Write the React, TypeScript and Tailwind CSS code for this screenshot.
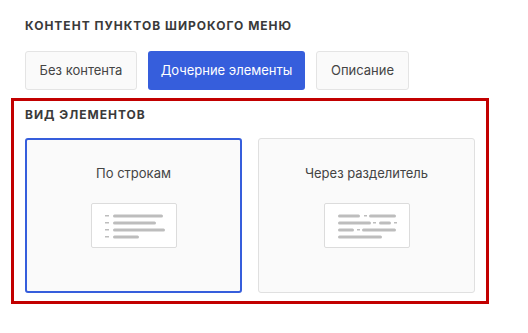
import React, { useState } from 'react';

const tabs = [
  { label: 'Без контента', w: 'w-[112px]' },
  { label: 'Дочерние элементы', w: 'w-[157px]' },
  { label: 'Описание', w: 'w-[93px]' },
];

function RowsPreview() {
  const lines = [50, 43, 52, 26];
  return (
    <svg width="86" height="45" viewBox="0 0 86 45">
      {lines.map((w, i) => (
        <g key={i}>
          <rect x="13" y={11 + i * 7} width="4" height="1.5" fill="#bdbdbd" />
          <rect x="21" y={10.5 + i * 7} width={w} height="3" rx="1.5" fill="#bdbdbd" />
        </g>
      ))}
    </svg>
  );
}

function SeparatorPreview() {
  // each row: bars and dashes, x positions relative to the box
  const rows: [number, number, boolean][][] = [
    [[13, 22, false], [39, 3, true], [44, 27, false]],
    [[13, 33, false], [48, 3, true], [54, 12, false], [69, 3, true]],
    [[13, 16, false], [32, 3, true], [37, 34, false]],
    [[13, 44, false]],
  ];
  return (
    <svg width="86" height="45" viewBox="0 0 86 45">
      {rows.map((row, i) =>
        row.map(([x, w, dash], j) =>
          dash ? (
            <rect key={`${i}-${j}`} x={x} y={11 + i * 7} width={w} height="1.5" fill="#bdbdbd" />
          ) : (
            <rect key={`${i}-${j}`} x={x} y={10.5 + i * 7} width={w} height="3" rx="1.5" fill="#bdbdbd" />
          )
        )
      )}
    </svg>
  );
}

export default function App() {
  const [tab, setTab] = useState(1);
  const [view, setView] = useState(0);

  return (
    <div className="w-[528px] h-[333px] bg-white text-[#444] font-['Inter','Open_Sans',sans-serif]">
      <div className="pl-[25px] pt-[18px]">
        <h2 className="text-[12px] font-bold tracking-[1px] text-[#3a3a3a] leading-[16px]">
          КОНТЕНТ ПУНКТОВ ШИРОКОГО МЕНЮ
        </h2>
        <div className="flex gap-[11px] mt-[17px]">
          {tabs.map((t, i) => (
            <button
              key={t.label}
              onClick={() => setTab(i)}
              className={
                t.w +
                (i === tab
                  ? ' h-[39px] rounded-[3px] bg-[#365edc] text-white text-[13px]'
                  : ' h-[39px] rounded-[3px] bg-[#fafafa] border border-[#e4e4e4] text-[#444] text-[13px]')
              }
            >
              {t.label}
            </button>
          ))}
        </div>
      </div>

      <div className="ml-[11px] mt-[8px] w-[478px] border-[3px] border-[#c20000] pt-[6px] pb-[8px] px-[11px]">
        <h3 className="text-[12px] font-bold tracking-[1px] text-[#3a3a3a] leading-[16px]">ВИД ЭЛЕМЕНТОВ</h3>
        <div className="flex gap-[16px] mt-[15px]">
          {['По строкам', 'Через разделитель'].map((label, i) => (
            <button
              key={label}
              onClick={() => setView(i)}
              className={
                'w-[217px] h-[155px] rounded-[3px] bg-[#fafafa] flex flex-col items-center ' +
                (i === view ? 'border-2 border-[#365edc] pt-[24px]' : 'border border-[#e0e0e0] pt-[25px]')
              }
            >
              <span className="text-[13px] leading-[18px] text-[#444]">{label}</span>
              <div className="mt-[21px] w-[86px] h-[45px] bg-white border border-[#dcdcdc] rounded-[2px] overflow-hidden">
                {i === 0 ? <RowsPreview /> : <SeparatorPreview />}
              </div>
            </button>
          ))}
        </div>
      </div>
    </div>
  );
}
